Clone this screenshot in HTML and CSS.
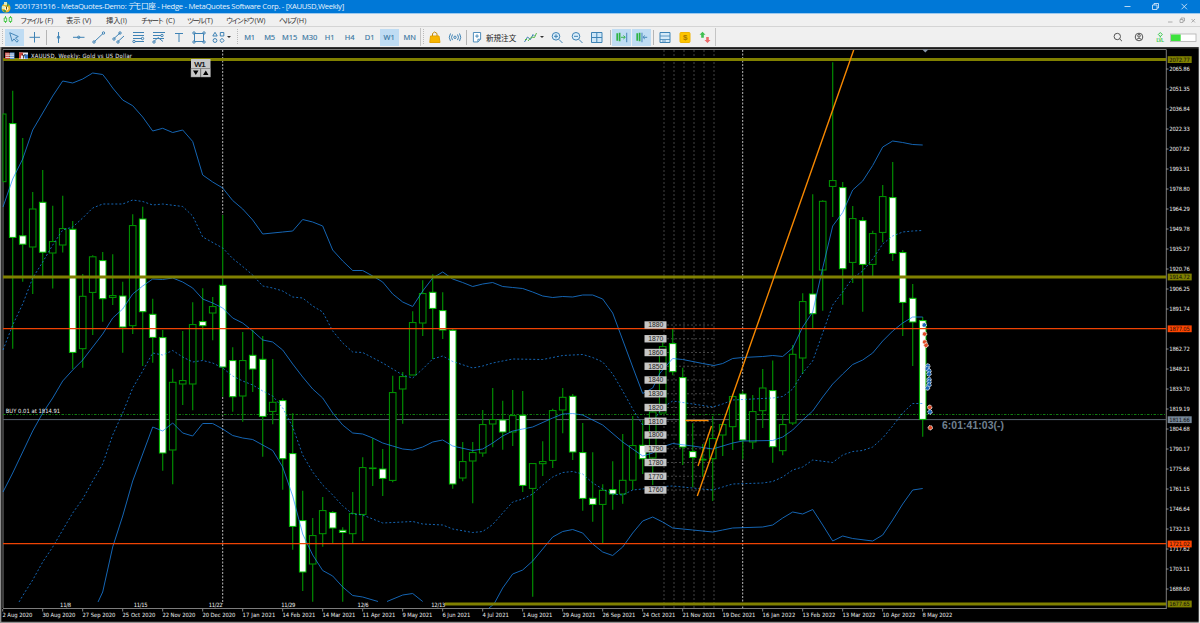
FILE: index.html
```html
<!DOCTYPE html>
<html lang="ja">
<head>
    <meta charset="UTF-8">
    <meta name="viewport" content="width=device-width, initial-scale=1.0">
    <title>XAUUSD,Weekly</title>
    <link rel="stylesheet" href="styles.css">
</head>
<body>
    <div class="titlebar">
        <svg class="app-icon" width="10" height="12" viewBox="0 0 10 12"><circle cx="5" cy="7" r="4.5" fill="#e9b529"/><path d="M3 1h3v3H3zM1 5h3v3H1z" fill="#d9e8c0"/><path d="M6 2l2 2-2 2zM2 9h3v2H3z" fill="#3f9a4e"/><circle cx="5.5" cy="7.5" r="2" fill="#fff4c4"/><path d="M5.500 5.500v3" stroke="#705010"/></svg>
        <span class="title">5001731516 - MetaQuotes-Demo: <span class="kana">デモ</span>口座 - Hedge - MetaQuotes Software Corp. - [XAUUSD,Weekly]</span>
        <svg class="window-buttons" width="78" height="14" viewBox="1122 0 78 14" fill="none" stroke="#e4f0fb" stroke-width=".8">
            <path d="M1124.500 6.500h6M1181.500 3.800l5.500 5.500M1187 3.800l-5.500 5.500"/>
            <path d="M1152.500 5h4.500v4.500h-4.500zM1154 5v-1.500h4.500v4.500h-1.500"/>
        </svg>
    </div>

    <div class="menubar">
        <svg class="menu-icon" width="10" height="10" viewBox="0 0 10 10" fill="none" stroke="#3cc43c" stroke-width=".9"><path d="M2.500 1v7M7.500 1v7"/><path d="M1.200 3h2.500v3.500H1.200zM6.200 2.500h2.500v4H6.200z" fill="#f0f0f0"/></svg>
        <div class="menu m-file"><span class="kana">ファイル</span> (F)</div>
        <div class="menu m-view">表示 (V)</div>
        <div class="menu m-insert">挿入(I)</div>
        <div class="menu m-chart"><span class="kana">チャート</span> (C)</div>
        <div class="menu m-tool"><span class="kana">ツール</span>(T)</div>
        <div class="menu m-window"><span class="kana">ウインドウ</span>(W)</div>
        <div class="menu m-help"><span class="kana">ヘルプ</span>(H)</div>
        <svg class="mdi-buttons" width="36" height="12" viewBox="1164 14 36 12" fill="none" stroke="#9c9c9c" stroke-width=".8"><path d="M1168 22h4.500M1180 19.500h3v3h-3zM1181 19.500v-1.500h3.500v3h-1.500M1191.500 19l3.500 3.500M1195 19l-3.500 3.500"/></svg>
    </div>

    <div class="toolbar">
        <i class="grip"></i>
        <div class="tool active"><svg viewBox="0 0 20 18"><path d="M5 4.500l2.500 9 2-2.500 3 3.500 1.500-1.500-3-3 3-1.500z"/></svg></div>
        <div class="tool"><svg viewBox="0 0 20 18"><path d="M9.500 4v10.500M4.500 9.300h10.500"/></svg></div>
        <i class="sep"></i>
        <div class="tool first"><svg viewBox="0 0 20 18"><path d="M9.500 4v11"/><circle cx="9.500" cy="9.300" r="1.200"/></svg></div>
        <div class="tool"><svg viewBox="0 0 20 18"><path d="M4 9.300h11.500"/><circle cx="9.700" cy="9.300" r="1.200"/></svg></div>
        <div class="tool"><svg viewBox="0 0 20 18"><path d="M5.500 13.500l8.500-8"/><circle cx="5" cy="14" r="1.200"/><circle cx="14.500" cy="5" r="1.200"/></svg></div>
        <div class="tool"><svg viewBox="0 0 20 18"><path d="M5 10.500l6-5.500M9 13.500l6-5.500"/><circle cx="5" cy="11" r="1.200"/><circle cx="11" cy="5" r="1.200"/><circle cx="9" cy="14" r="1.200"/></svg></div>
        <div class="tool"><svg viewBox="0 0 20 18"><path d="M4 4.500h11M4 7.500h11M4 10.500h9M6 13.500h9"/><circle cx="13.500" cy="10.500" r="1.200"/><circle cx="5" cy="13.500" r="1.200"/></svg></div>
        <div class="tool"><svg viewBox="0 0 20 18"><path d="M4 4.500h12M4 7.500h8M5 13.500l4-4 5 4M4 10.500h11"/><circle cx="13" cy="7.500" r="1.200"/><circle cx="5" cy="14" r="1.200"/></svg></div>
        <div class="tool"><svg viewBox="0 0 20 18"><path d="M6 5.500h8M10 5.500v8.500"/></svg></div>
        <div class="tool"><svg viewBox="0 0 20 18"><path d="M5.500 5.500h9v8h-9z"/><circle cx="5" cy="5" r="1.200"/><circle cx="15" cy="5" r="1.200"/><circle cx="5" cy="14" r="1.200"/><circle cx="15" cy="14" r="1.200"/></svg></div>
        <div class="tool shapes"><svg viewBox="0 0 20 18"><path d="M6 4.300l2.200 3.700H3.800zM11.300 4.500h3.500v3.500h-3.500z"/><circle cx="6" cy="12.500" r="1.900"/><path d="M13 10.400l2.200 2.100-2.200 2.200-2.200-2.200z"/></svg></div>
        <i class="caret"></i>
        <i class="grip wide"></i>
        <div class="tool tf">M1</div>
        <div class="tool tf">M5</div>
        <div class="tool tf">M15</div>
        <div class="tool tf">M30</div>
        <div class="tool tf">H1</div>
        <div class="tool tf">H4</div>
        <div class="tool tf">D1</div>
        <div class="tool tf active">W1</div>
        <div class="tool tf">MN</div>
        <i class="edge"></i>
        <i class="grip narrow"></i>
        <div class="tool"><svg viewBox="0 0 20 18"><path d="M5.500 8h8.500l1 6.500H4.800z" fill="#f7b500" stroke="#e5a300"/><path d="M7.500 8V5.500q2-3 4.500 0V8" stroke="#c28c10"/></svg></div>
        <div class="tool"><svg viewBox="0 0 20 18"><circle cx="10" cy="9.300" r="1.200"/><path d="M7.500 6.500q-2 2.800 0 5.600M5.500 5.500q-2.500 3.800 0 7.600M12.500 6.500q2 2.800 0 5.600M14.500 5.500q2.500 3.800 0 7.600"/></svg></div>
        <i class="sep"></i>
        <div class="tool order-icon"><svg viewBox="0 0 20 18"><path d="M6 4h8v7.500l-3 3H6z" fill="#fff"/><path d="M14 11.500h-3v3M8 8h4M10 6v4"/></svg></div>
        <span class="new-order">新規注文</span>
        <div class="tool ind"><svg viewBox="0 0 20 18"><path d="M4.500 14l3-5 3 2.500 2.500-5 1.500 1.500"/><path d="M5 11.500h2M8 13l3.500-4 3 .5 2-4.500" stroke="#55b948"/></svg></div>
        <i class="caret"></i>
        <div class="tool zoom-in"><svg viewBox="0 0 20 18"><circle cx="9" cy="8.300" r="3.800" fill="#dceefa"/><path d="M12 11.500l3.500 3.500M7 8.300h4M9 6.300v4"/></svg></div>
        <div class="tool"><svg viewBox="0 0 20 18"><circle cx="9" cy="8.300" r="3.800" fill="#dceefa"/><path d="M12 11.500l3.500 3.500M7 8.300h4"/></svg></div>
        <div class="tool tiles"><svg viewBox="0 0 20 18"><path d="M4.500 4.500h10.500v10H4.500zM9.800 4.500v10M4.500 9.500h10.500" fill="#cfe7f8"/></svg></div>
        <i class="sep"></i>
        <div class="tool active"><svg viewBox="0 0 20 18"><path d="M5.500 5v8M8 4.500v9" stroke="#2fb344" stroke-width="1.800"/><path d="M9.500 9.300h4M12 7.500l2 1.800-2 1.800" stroke="#2fb344"/><path d="M15.500 4.500v10"/></svg></div>
        <div class="tool active second"><svg viewBox="0 0 20 18"><path d="M5.500 5v8M8 4.500v9" stroke="#2fb344" stroke-width="1.800"/><path d="M10.500 4.500v10M16 9.300h-4M13.500 7.500l-2 1.800 2 1.800"/></svg></div>
        <i class="sep tight"></i>
        <div class="tool"><svg viewBox="0 0 20 18"><path d="M5 4.500h10v10H5z" fill="#d6eaf8"/><path d="M5 8h10M5 11.500h10M7 13h4" stroke-width=".8"/></svg></div>
        <div class="tool"><svg viewBox="0 0 20 18"><rect x="5" y="4.500" width="10" height="10" rx="1" fill="#fdc500" stroke="#f0b400"/><text x="8" y="12.300" class="coin">$</text></svg></div>
        <div class="tool"><svg viewBox="0 0 20 18"><path d="M7.500 3.800l3 3H8.800v3H6.200v-3H4.500z" fill="#3fbf51" stroke="none"/><path d="M12.500 15l3-3h-1.700V9h-2.600v3H9.500z" fill="#ee6b6b" stroke="none"/></svg></div>
        <i class="edge"></i>
        <div class="status">
            <svg width="90" height="20" viewBox="1110 27 90 20" fill="none" stroke="#555" stroke-width="1">
                <circle cx="1117.300" cy="36.500" r="3.200"/><path d="M1119.600 38.800l2.400 2.400"/>
                <circle cx="1139" cy="37" r="3.800"/><circle cx="1139" cy="35.800" r="1.300"/><path d="M1136.500 39.500q2.500-3 5 0"/>
                <path d="M1160.300 32.500l2 2-2 2-2-2zM1160.300 36v1.500" stroke="#35c94a"/>
                <text x="1156.500" y="42" class="lvl" textLength="7.500">LVL</text>
                <rect x="1170.500" y="34" width="25.500" height="7.500" fill="#fff" stroke="#b0b0b0" stroke-width=".8"/>
                <rect x="1171" y="34.500" width="9.700" height="6.500" fill="#3ee23e" stroke="none"/>
            </svg>
        </div>
    </div>

    <svg class="chart" id="chart" width="1200" height="576" viewBox="0 47 1200 576">
        <rect x="0" y="47" width="1200" height="576" fill="#000"/>
        <g class="frame">
            <path d="M0 47.600H1200" stroke="#363636" stroke-width="1.600"/>
            <path d="M.7 47V622" stroke="#a0a0a0" stroke-width="1.200"/>
            <path d="M3 608V49.500H1166.300V608.500" stroke="#7c7c7c" stroke-width="1"/>
            <path d="M3 608.500H1166.800" stroke="#7c7c7c" stroke-width="1"/>
            <path d="M0 622.300H1200" stroke="#909090" stroke-width="1.200"/>
            <path d="M1199.400 47V623" stroke="#e8e8e8" stroke-width="1.400"/>
        </g>
        <g id="grid"></g>
        <path class="period" d="M222.700 50V215M222.700 397V604M742.700 50V608"/>
        <path d="M3 414.500H1166" stroke="#128a12" stroke-width=".9" stroke-dasharray="2.500 1.500 1 1.500"/>
        <path d="M3 419.600H1166" stroke="#5a6570" stroke-width="1"/>
        <g id="candles"></g>
        <g class="bands">
            <polyline points="3,207 12.7,179 22.7,159 32.7,130 42.7,113 52.7,96 62.7,81 72.7,83 82.7,79 92.7,73 102.7,74.5 107,80 112.7,88 122.7,100 132.7,105.7 142.7,117 152.7,131 162.7,128.3 172.7,132.5 182.7,130 192.7,141.5 202.7,175 212.7,182 222.7,188 232.7,200.5 242.7,209 252.7,220 262.7,234 282.7,232 292.7,231 302.7,219.5 312.7,222 322.7,226 332.7,250 342.7,261 352.7,270.5 362.7,270.5 372.7,276 382.7,282 392.7,294 402.7,302 412.7,306.5 422.7,291 432.7,278 442.7,272 452.7,279 462.7,282.5 472.7,286.5 482.7,284 492.7,282.5 502.7,286.5 512.7,287.5 522.7,288.5 532.7,292 542.7,296 552.7,297.5 562.7,296.5 572.7,297 582.7,295 592.7,295 602.7,299 612.7,313 622.7,340 632.7,367 642.7,393.5 652.7,388 660,373 672.7,358.5 682.7,359.5 702.7,363.5 714,365.5 722.7,363.5 732.7,358.5 742.7,357.5 762.7,356.5 772.7,355.5 782.7,356.5 792.7,348 802.7,327 812.7,312 822.7,268 832.7,226 842.7,212.5 852.7,190 862.7,181 872.7,165.5 882.7,147 892.7,141 902.7,142.5 912.7,144.5 922.7,145"/>
            <polyline class="dash" points="3,350 12.7,325 22.7,304 32.7,278 42.7,262 52.7,245 62.7,230 72.7,227 82.7,218 92.7,208 102.7,204 122.7,204 132.7,200 142.7,201.5 152.7,205 162.7,204 182.7,206.5 192.7,216 202.7,237 222.7,248 232.7,258.5 242.7,266.5 252.7,275 262.7,286 272.7,288 282.7,291 292.7,297 302.7,298 312.7,306 322.7,312 332.7,331 342.7,343 352.7,352 362.7,352.5 382.7,363 402.7,375 412.7,378 422.7,369 432.7,359 442.7,356 452.7,361.5 472.7,368 482.7,366 492.7,363 512.7,359 542.7,359.5 562.7,355.5 582.7,354.5 592.7,357.5 602.7,362 612.7,374 622.7,391 632.7,409 642.7,425 652.7,422 662,408 672.7,401 692.7,404 712.7,407 722.7,404 732.7,400 752.7,399 772.7,398 782.7,396.5 792.7,389 802.7,373 812.7,361 822.7,333 832.7,305 842.7,292 852.7,278 862.7,271 872.7,259 882.7,244 892.7,236 902.7,232 912.7,231 922.7,230.5"/>
            <polyline points="3,492 12.7,473 32.7,431 42.7,413 52.7,398 62.7,381 72.7,370 82.7,360 92.7,347 102.7,334 112.7,318 122.7,309 132.7,294 142.7,286 152.7,279 162.7,279.5 172.7,278 182.7,282 192.7,288 202.7,299 212.7,303 222.7,308 232.7,318 242.7,323 252.7,331 262.7,340 272.7,342 282.7,350 292.7,364 302.7,377 312.7,389 322.7,398 332.7,413 342.7,425 352.7,433 362.7,434 372.7,438 382.7,443 392.7,446 402.7,449 412.7,450 422.7,447 432.7,442 442.7,440 452.7,446 472.7,450.5 482.7,449 492.7,443 502.7,436 512.7,431 522.7,429 532.7,427 552.7,418 562.7,414 572.7,413.5 582.7,415 602.7,425 622.7,442 632.7,449 642.7,456 652.7,453 662,447 672.7,443.5 692.7,446 712.7,449 732.7,443 742.7,441 772.7,440.5 782.7,437 792.7,430 802.7,420 812.7,411 822.7,397 832.7,384 842.7,374 852.7,364.5 862.7,360 872.7,353 882.7,341 892.7,331 902.7,323 912.7,317 922.7,317"/>
            <polyline class="dash" points="19,602 25,592 32.7,580 42.7,562 52.7,547 62.7,530 72.7,513 82.7,499 92.7,481 102.7,464 112.7,435 122.7,413 132.7,388 142.7,371 152.7,353 162.7,355 172.7,350.5 182.7,357 192.7,362 202.7,360.5 212.7,363 222.7,368 232.7,376 242.7,381 252.7,385 262.7,391 272.7,396 282.7,408 292.7,427 302.7,455 312.7,472 322.7,485 332.7,495 342.7,506 352.7,514 362.7,515 382.7,523 412.7,521.5 422.7,524 442.7,525 452.7,529 472.7,532.5 482.7,531.5 492.7,524.5 502.7,513 512.7,502 522.7,499 532.7,494 542.7,485 552.7,477 562.7,472.5 572.7,471.5 582.7,474 592.7,483 602.7,489 612.7,494 622.7,495 632.7,490 642.7,489 652.7,487 672.7,486 692.7,488 712.7,490 722.7,487 732.7,484 762.7,483 772.7,481.5 782.7,477 792.7,470 802.7,467 812.7,460 832.7,462.5 842.7,455 852.7,451.5 862.7,450.5 872.7,447 882.7,438 892.7,426 902.7,413 912.7,403.5 922.7,403.5"/>
            <polyline points="98,602 102.7,592 112.7,547 122.7,516 132.7,481 142.7,454 152.7,427 162.7,431 172.7,423 182.7,433 192.7,436 202.7,423.5 212.7,423.5 222.7,429 232.7,435.5 242.7,438 252.7,439.5 262.7,445 272.7,450.5 282.7,467 292.7,496 302.7,534 312.7,555 322.7,570.5 332.7,576 342.7,587 352.7,595.5 362.7,597 378,601.5"/>
            <polyline points="387,601.5 402.7,595 412.7,593.5 422.7,601.5"/>
            <polyline points="489,608 494,604 502.7,588 512.7,574 522.7,570 532.7,561 552.7,537 562.7,531.5 572.7,529.5 582.7,533 592.7,544 602.7,552 612.7,555.5 622.7,547 632.7,533 642.7,521 652.7,517 662.7,522 672.7,528 692.7,530 712.7,532 722.7,530 732.7,528 762.7,527 772.7,525 782.7,518 792.7,512 802.7,514 812.7,509.5 822.7,525 832.7,541 842.7,536 852.7,538.5 872.7,541 882.7,535 892.7,520 902.7,504 912.7,490 922.7,488.5"/>
        </g>
        <path class="zone" d="M3 59.600H1166M3 277H1166M445 604H1166"/>
        <path class="level" d="M3 328.600H1166M3 543.600H1166"/>
        <path class="trend" d="M697.300 496L853.700 50M698 466L711.500 426"/>
        <path d="M685.500 420.500H708.500" stroke="#ff8c00" stroke-width="1.400"/>
        <g id="scale"></g>
        <g id="trades"></g>
        <path d="M922.300 49.500h6l-3 3z" fill="#8796a8"/>
        <g id="labels"></g>
        <g transform="translate(5 52.500)">
            <rect width="4.500" height="6.500" fill="#c9403a"/><rect x="5" width="4.500" height="6.500" fill="#5c8fd6"/>
            <path d="M.5 1.500h8.500M.5 3.200h8.500M.5 5h8.500" stroke="#e6e6e6" stroke-width=".9"/>
            <rect x="14" width="9" height="6.500" fill="#e9e9ee"/><path d="M14 0h4v3h-2v3h-2z" fill="#d4453e"/><path d="M19 2h4v4h-3z" fill="#3473c8"/><path d="M17 1.500l1.500 2 2-2M18.500 3v3" stroke="#222" fill="none" stroke-width=".8"/>
        </g>
        <g class="period-box">
            <rect x="191" y="59" width="19.500" height="9.500" fill="#c8c8c8"/>
            <rect x="191" y="68.500" width="9.500" height="8.500" fill="#c8c8c8" stroke="#888" stroke-width=".5"/>
            <rect x="201" y="68.500" width="9.500" height="8.500" fill="#c8c8c8" stroke="#888" stroke-width=".5"/>
            <path d="M193 70.500h5.500l-2.700 4.500zM203 75h5.500l-2.700-4.500z" fill="#000"/>
            <text x="194.300" y="66.500" textLength="11.500">W1</text>
        </g>
        <text class="countdown" x="942" y="429" textLength="62">6:01:41:03(-)</text>
    </svg>

    <script src="chart.js"></script>
</body>
</html>
```
FILE: styles.css
```css
body, html {
    margin: 0;
    padding: 0;
    height: 100%;
    overflow: hidden;
    background: #000;
    font-family: "Open Sans", "Noto Sans", "Noto Sans CJK JP", sans-serif;
}

.titlebar {
    height: 14px;
    background: #0078d7;
    border-bottom: 1px solid #9cc9ee;
    box-sizing: border-box;
    display: flex;
    align-items: center;
    color: #e6f2fc;
    font-size: 7.7px;
    letter-spacing: -0.31px;
    line-height: 13px;
    white-space: nowrap;
}

.app-icon {
    margin: 0 3.5px 0 1px;
}

.kana {
    letter-spacing: -2px;
    margin-right: 1.5px;
}

.window-buttons,
.mdi-buttons,
.status {
    margin-left: auto;
}

.menubar {
    height: 13px;
    background: #f0f0f0;
    border-bottom: 1px solid #d4d4d4;
    box-sizing: border-box;
    display: flex;
    align-items: center;
    color: #333;
    font-size: 7.3px;
    line-height: 12px;
    white-space: nowrap;
}

.menu { flex: none; }
.menu .kana { letter-spacing: -1.9px; }
.menu-icon { margin: 0 7px 0 3px; }
.m-file { width: 46px; }
.m-view { width: 40px; }
.m-insert { width: 35px; }
.m-chart { width: 46px; }
.m-tool { width: 39px; }
.m-window { width: 53px; }
.m-help { width: 40px; }

.toolbar {
    height: 20px;
    background: #f0f0f0;
    display: flex;
    align-items: center;
}

.toolbar > * {
    flex: none;
}

.tool {
    width: 20px;
    height: 17px;
    display: flex;
    align-items: center;
    justify-content: center;
}

.tool svg {
    width: 20px;
    height: 18px;
    fill: none;
    stroke: #3f83b5;
    stroke-width: 1;
}

.tool.active {
    width: 19px;
    background: #bfdcf3;
    margin-right: 1px;
}

.tool.second { margin-right: 0; }
.tool.first { margin-left: 1px; }
.tool.shapes { margin-right: -2px; }
.tool.tiles { margin-right: 2px; }

.tf {
    font-size: 7.5px;
    color: #35749f;
    letter-spacing: -0.1px;
    -webkit-text-stroke: 0.15px #35749f;
}

.grip {
    width: 3px;
    height: 16px;
    margin: 0 1px;
    background: repeating-linear-gradient(#bbb 0 1px, transparent 1px 2px) 1px 0 / 1px 100% no-repeat;
}

.grip.wide {
    margin: 0 1px 0 4.6px;
}

.grip.narrow { margin: 0 0.3px 0 1px; }

.sep {
    width: 1px;
    height: 15px;
    margin: 0 1px;
    background: #b5b5b5;
}

.sep.tight { margin-left: 2px; }

.edge {
    width: 1px;
    height: 18px;
    background: #c4c4c4;
}

.caret {
    width: 0;
    height: 0;
    border: 2.2px solid transparent;
    border-top: 2.8px solid #333;
    border-bottom: 0;
}

.order-icon { width: 18px; }

.new-order {
    width: 34px;
    font-size: 7.6px;
    color: #222;
    white-space: nowrap;
}

.zoom-in { margin-left: 3px; }

.coin {
    font: bold 8px "Liberation Sans", sans-serif;
    fill: #a87600;
    stroke: none;
}

.lvl {
    font: bold 4.5px "Liberation Sans", sans-serif;
    fill: #35c94a;
    stroke: none;
}

.status { height: 20px; }

.chart {
    display: block;
}

.frame path { fill: none; }

.grid-line {
    stroke: #424242;
    stroke-width: 1;
    stroke-dasharray: 2 2;
}

.period {
    stroke: #b8b8b8;
    stroke-width: 1;
    stroke-dasharray: 2 1.5;
}

.wick {
    stroke: #008c00;
    stroke-width: 1.2;
}

.candle {
    fill: #000;
    stroke: #009c00;
    stroke-width: 1;
}

.candle.down {
    fill: #fff;
    stroke: #00c000;
}

.bands {
    fill: none;
    stroke: #1e90ff;
    stroke-width: 1;
    opacity: 0.7;
}

.bands .dash { stroke-dasharray: 2 2; }

.zone {
    stroke: #808000;
    stroke-width: 3;
}

.level {
    stroke: #ee4304;
    stroke-width: 1.4;
}

.trend {
    stroke: #f58700;
    stroke-width: 1.4;
}

.axis {
    font: 5.8px "DejaVu Sans Condensed", "DejaVu Sans", sans-serif;
    fill: #eee;
}

.axis.dark { fill: #111; }

.tick {
    stroke: #aaa;
    stroke-width: 0.8;
}

.scale-text {
    font: 6.8px "Liberation Sans", sans-serif;
    fill: #222;
}

.period-box text {
    font: 8px "Liberation Sans", sans-serif;
    fill: #000;
    stroke: #000;
    stroke-width: 0.2;
}

.countdown {
    font: bold 10.4px "Liberation Sans", sans-serif;
    fill: #708090;
}
```
FILE: chart.js
```js
// one row per week: high, body top, body bottom, low, 1 = down candle
const candles = [
    [113.7,113.7,182,182,0],[90.7,123.3,237.7,348.7,1],[138,235.5,244.5,281.7,1],[192,208.7,247.3,294,0],
    [170,202,252.5,276,1],[205.7,241.3,253.3,288.5,0],[195.7,228.3,245.3,252.5,0],[221,229,352.7,369,1],
    [274,296,349,367.7,0],[255.3,256.5,292.7,335,0],[252,260.3,299,321.7,1],[254.3,295.3,297.7,305,0],
    [281.7,295.7,327.3,352.7,1],[214.3,225.3,326,334,0],[206.7,218.7,312,366,1],[298.7,314,337.7,362.7,1],
    [330,337.3,453.3,470.7,1],[368.7,382,450.3,484.3,0],[331,380.3,384.3,405,0],[302.3,324.3,384.3,410.3,0],
    [288.3,321.3,326,360,1],[297,306.3,313.3,340.3,0],[215,285,367.3,396.7,1],[347.3,360.3,397,411.7,1],
    [332,360.3,396.3,421.7,0],[330,355,369.3,392,1],[336,359,416.7,456.7,1],[359,402,411.7,424.3,0],
    [398.3,400.3,459,489.7,1],[413.3,453.3,526.7,549.7,1],[490.7,520.3,572.3,591,1],[518,535.3,564.3,601.7,0],
    [497,510.3,534,546.7,0],[511,512.3,528.3,543.7,1],[527.3,530,532.7,601.7,1],[492,513.3,534,543.3,0],
    [457.3,467.3,514.7,541,0],[438.3,467.7,468.7,486,0],[449,468.7,478.7,496,1],[375.7,392.3,480.7,482.3,0],
    [372,376.3,389.3,423.7,0],[311.3,322.3,375.3,375.3,0],[280.3,293.3,323.3,336,0],[274.3,292,308.7,359,1],
    [292.3,310.3,330.3,339,1],[328.3,330,484.3,488.7,1],[442,461.3,478.3,481.3,0],[442,452.3,461.3,503.3,0],
    [410,424.3,453.3,456.7,0],[388,419.3,424.3,447.3,0],[400.7,419.7,432.3,449.7,1],[390,415.3,432.3,446,0],
    [391,415,485.7,492,1],[463.3,463.3,488.7,596.7,0],[441.3,461.3,464,476,0],[408.7,410.3,460.7,468,0],
    [388,397,410.3,433.3,0],[394,396,452.3,460,1],[423,452.3,498.7,510.7,1],[452.3,498,504.7,521.7,1],
    [484.3,490,504.7,543.3,0],[461.3,489.3,494.3,509.7,1],[434,480,494.3,503.7,0],[416,445.3,480.5,490,0],
    [420.3,445,459,474,1],[410,411.7,458.3,485,0],[341.7,346.3,413.3,413.3,0],[329,343.3,372,375.3,1],
    [367.7,377.3,447.3,465,1],[423.3,451.3,457.7,487.3,1],[444,459,460.3,476.7,0],[416,438.3,459,501,0],
    [421.7,424.3,435.3,456,0],[394,396.3,427,450,0],[391.3,393.7,440.3,459.3,1],[395,411.3,442.3,449,0],
    [369,387.7,411,428,0],[360.5,390.3,447,462.7,1],[414.3,424.3,451,455.3,0],[345,354,423.3,425,0],
    [293.3,301.3,358.3,374,0],[194.3,293.7,314,328,1],[200.3,201,270.3,310.7,0],[62.3,180.3,186.7,217,0],
    [182,187.3,269,304.7,1],[206,218.3,262.7,283,0],[217,220.3,264.7,311.7,1],[230.7,233.3,264.7,276,0],
    [185,196.3,232.7,242.3,0],[162,197.3,253.7,261,1],[250,252.3,302.7,336,1],[284,298,322.3,366,1],
    [317,320.3,419.7,436.7,1]
];

const svgNS = "http://www.w3.org/2000/svg";

function add(parent, tag, attrs, text) {
    const el = document.createElementNS(svgNS, tag);
    for (const key in attrs) el.setAttribute(key, attrs[key]);
    if (text) el.textContent = text;
    document.getElementById(parent).appendChild(el);
}

// candles
candles.forEach(([high, top, bottom, low, down], i) => {
    const x = 2.7 + i * 10;
    const left = i === 0 ? 3 : x - 3.3;
    if (high < top) add("candles", "path", { class: "wick", d: `M${x} ${high}V${top}` });
    if (low > bottom) add("candles", "path", { class: "wick", d: `M${x} ${bottom}V${low}` });
    add("candles", "rect", {
        class: down ? "candle down" : "candle",
        x: left, y: top + 0.3, width: x + 3.3 - left, height: Math.max(bottom - top - 0.6, 0.6)
    });
});

// dotted grid with the round price boxes
for (let i = 0; i < 6; i++) {
    add("grid", "path", { class: "grid-line", d: `M${664 + i * 10} 50V608` });
}
for (let i = 0; i < 13; i++) {
    const y = 325 + i * 13.75;
    add("grid", "path", { class: "grid-line", d: `M667 ${y}H714` });
    add("scale", "rect", { x: 644.5, y: y - 3.7, width: 22, height: 7.4, fill: "#c6c6c6" });
    add("scale", "text", { class: "scale-text", x: 648.3, y: y + 2.4, textLength: 15 }, String(1880 - i * 10));
}

// price axis
for (let i = 0; i < 27; i++) {
    if (i === 13) continue;
    const y = 69 + i * 20;
    add("labels", "path", { class: "tick", d: `M1166 ${y}h2.500` });
    add("labels", "text", { class: "axis", x: 1169.3, y: y + 2.1, textLength: 20.5 }, (2065.86 - i * 14.51).toFixed(2));
}

const tags = [
    ["2072.77", 59.6, "#808000"], ["1914.72", 277, "#808000"], ["1877.05", 328.8, "#ff4500"],
    ["1811.66", 419.7, "#778899"], ["1721.02", 544, "#ff4500"], ["1677.65", 604, "#808000"]
];
tags.forEach(([price, y, color]) => {
    add("labels", "rect", { x: 1167.7, y: y - 3.4, width: 24, height: 6.8, fill: color });
    add("labels", "text", { class: "axis dark", x: 1169.3, y: y + 2.1, textLength: 20.5 }, price);
});

// time axis, a label every 4 weeks
const dates = [
    "2 Aug 2020", "30 Aug 2020", "27 Sep 2020", "25 Oct 2020", "22 Nov 2020", "20 Dec 2020", "17 Jan 2021", "14 Feb 2021",
    "14 Mar 2021", "11 Apr 2021", "9 May 2021", "6 Jun 2021", "4 Jul 2021", "1 Aug 2021", "29 Aug 2021", "26 Sep 2021",
    "24 Oct 2021", "21 Nov 2021", "19 Dec 2021", "16 Jan 2022", "13 Feb 2022", "13 Mar 2022", "10 Apr 2022", "8 May 2022"
];
dates.forEach((date, i) => {
    const x = 2.7 + i * 40;
    // Jun and Jul have narrower letters
    const charWidth = date.includes("Jul") ? 2.65 : date.includes("Jun") ? 2.8 : 3;
    add("labels", "path", { class: "tick", d: `M${x} 609v2.500` });
    add("labels", "text", { class: "axis", x: x - 0.3, y: 616.9, textLength: date.length * charWidth }, date);
});

[["11/8", 60], ["11/15", 133.7], ["11/22", 208.7], ["11/29", 281.3], ["12/6", 357.5], ["12/13", 431.3]].forEach(([t, x]) => {
    add("labels", "text", { class: "axis", x: x, y: 607.3, textLength: t.length * 2.8 }, t);
});

add("labels", "text", { class: "axis", x: 31, y: 58.2, textLength: 101 }, "XAUUSD, Weekly:  Gold vs US Dollar");
add("labels", "text", { class: "axis", x: 5.7, y: 413, textLength: 54.5 }, "BUY 0.01 at 1814.91");

// trade markers
const buy = "#1a66b8", sell = "#e04a26";
[
    [924.3, 325, buy], [924.6, 334, sell], [924.7, 342, sell], [926, 345.3, sell], [927.8, 366, buy], [927.3, 368.7, buy],
    [929, 371, buy], [929, 374, buy], [929, 379.5, buy], [929, 382, buy], [929, 385, buy], [927.5, 388, buy],
    [929.7, 407.3, sell], [930, 412, buy], [930.3, 427.7, sell]
].forEach(([x, y, color]) => {
    add("trades", "circle", { cx: x, cy: y, r: 2.2, fill: color, stroke: "#f0f0f0", "stroke-width": 1, "stroke-dasharray": "1.400 .6" });
});
```
